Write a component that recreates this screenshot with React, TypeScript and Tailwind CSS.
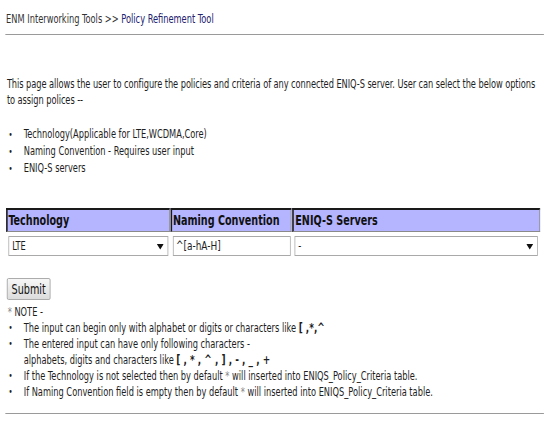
import React from "react";

const font = { fontFamily: '"DejaVu Sans Condensed", "DejaVu Sans", sans-serif' };

function Bullet({ children }: { children: React.ReactNode }) {
  return (
    <li className="flex">
      <span className="w-[21px] shrink-0 pl-[1px] text-[10px]">•</span>
      <span>{children}</span>
    </li>
  );
}

function Arrow() {
  return (
    <svg width="9" height="7" viewBox="0 0 9 7" className="shrink-0">
      <path d="M0 1 L9 1 L4.5 6.5 Z" fill="#111" />
    </svg>
  );
}

const th =
  "h-[24px] bg-[#b4b4ff] border-t-2 border-l-2 border-[#1a1a1a] border-r border-b border-r-[#8a8a8a] border-b-[#8a8a8a] font-bold text-[14px] leading-[20px] pl-[1px] text-[#111]";

export default function App() {
  return (
    <div className="w-[544px] h-[428px] overflow-hidden bg-white">
      <div
        className="w-[711px] h-[428px] origin-top-left scale-x-[0.765] text-[#1e1e1e]"
        style={font}
      >
        <div className="pt-[12px] pl-[8px] text-[12px] leading-[15px] text-[#333]">
          ENM Interworking Tools &gt;&gt; <span className="text-[#22226e]">Policy Refinement Tool</span>
        </div>
        <div className="mt-[7px] ml-[7px] border-t border-[#9a9a9a]" />

        <p className="mt-[41px] pl-[9px] pr-[8px] text-[12px] leading-[16px] tracking-[-0.08px]">
          This page allows the user to configure the policies and criteria of any connected ENIQ-S server. User can
          select the below options to assign polices --
        </p>

        <ul className="mt-[18px] pl-[10px] text-[12px] leading-[17px]">
          <Bullet>Technology(Applicable for LTE,WCDMA,Core)</Bullet>
          <Bullet>Naming Convention - Requires user input</Bullet>
          <Bullet>ENIQ-S servers</Bullet>
        </ul>

        <div className="mt-[31px] ml-[8px] w-[698px]">
          <div className="flex gap-[1px]">
            <div className={`w-[214px] ${th}`}>Technology</div>
            <div className={`w-[158px] ${th}`}>Naming Convention</div>
            <div className={`flex-1 ${th} pl-[2px]`}>ENIQ-S Servers</div>
          </div>
          <div className="flex gap-[1px] mt-[4px] text-[12px]">
            <div className="w-[214px] pl-[3px]">
              <div className="h-[20px] w-[209px] border border-[#a9a9a9] flex items-center justify-between pl-[4px] pr-[5px]">
                <span>LTE</span>
                <Arrow />
              </div>
            </div>
            <div className="w-[158px] pl-[3px]">
              <div className="h-[20px] w-[154px] border border-[#a9a9a9] flex items-center px-[3px] text-[13px]">
                ^[a-hA-H]
              </div>
            </div>
            <div className="flex-1 pl-[3px]">
              <div className="h-[20px] w-[318px] border border-[#a9a9a9] flex items-center justify-between pl-[4px] pr-[5px]">
                <span>-</span>
                <Arrow />
              </div>
            </div>
          </div>
        </div>

        <div className="mt-[21px] ml-[9px]">
          <button className="h-[22px] w-[57px] border border-[#a0a0a0] rounded-[2px] bg-gradient-to-b from-[#f7f7f7] to-[#dcdcdc] text-[14px] leading-[18px] text-[#111]">
            Submit
          </button>
        </div>

        <div className="mt-[4px] pl-[10px] text-[12px] leading-[15px]">
          <div>
            <span className="text-[#888]">*</span> NOTE -
          </div>
          <ul className="leading-[16px]">
            <Bullet>
              The input can begin only with alphabet or digits or characters like{" "}
              <b className="text-[13px]">[ ,*,^</b>
            </Bullet>
            <Bullet>
              The entered input can have only following characters -
              <br />
              alphabets, digits and characters like <b className="text-[13px]">[ , * , ^ , ] , - , _ , +</b>
            </Bullet>
            <Bullet>
              If the Technology is not selected then by default <span className="text-[#888]">*</span> will inserted
              into ENIQS_Policy_Criteria table.
            </Bullet>
            <Bullet>
              If Naming Convention field is empty then by default <span className="text-[#888]">*</span> will
              inserted into ENIQS_Policy_Criteria table.
            </Bullet>
          </ul>
        </div>
        <div className="mt-[13px] ml-[7px] border-t border-[#9a9a9a]" />
      </div>
    </div>
  );
}
